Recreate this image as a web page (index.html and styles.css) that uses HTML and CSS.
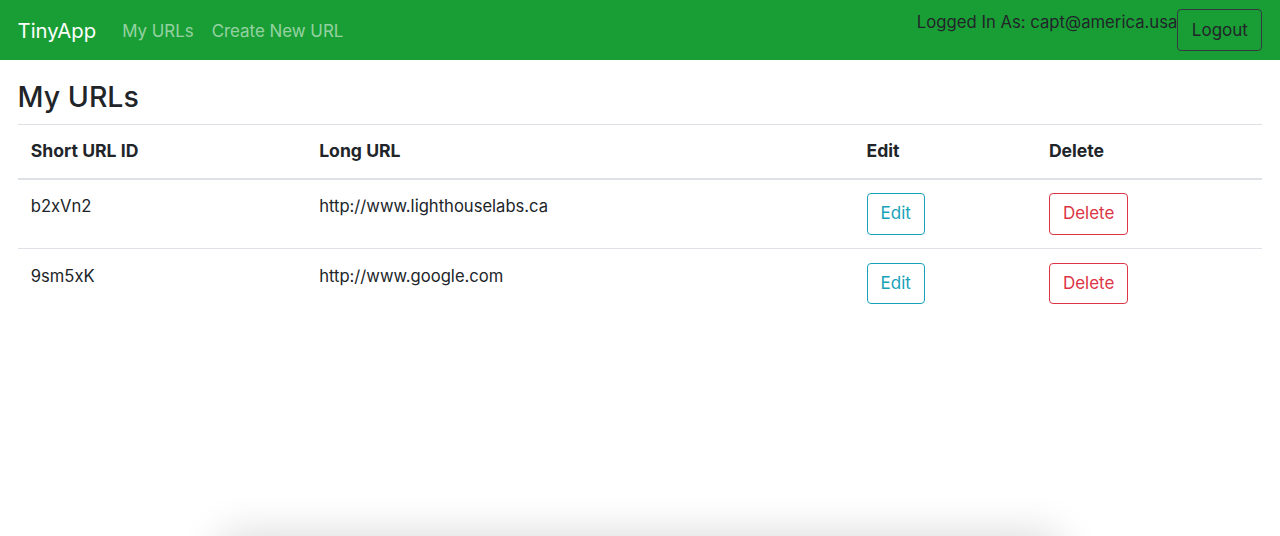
FILE: index.html
```html
<!DOCTYPE html>
<html lang="en">
<head>
<meta charset="utf-8">
<title>TinyApp</title>
<link rel="stylesheet" href="styles.css">
</head>
<body>
<nav class="navbar">
  <div class="nav-left">
    <a class="brand" href="#">TinyApp</a>
    <a class="nav-link" href="#">My URLs</a>
    <a class="nav-link" href="#">Create New URL</a>
  </div>
  <div class="nav-right">
    <span class="logged">Logged In As: capt@america.usa</span>
    <button class="btn btn-logout">Logout</button>
  </div>
</nav>
<main class="content">
  <h3 class="title">My URLs</h3>
  <table class="urls">
    <thead>
      <tr>
        <th class="col-id">Short URL ID</th>
        <th class="col-long">Long URL</th>
        <th class="col-edit">Edit</th>
        <th class="col-del">Delete</th>
      </tr>
    </thead>
    <tbody>
      <tr>
        <td>b2xVn2</td>
        <td>http://www.lighthouselabs.ca</td>
        <td><button class="btn btn-info">Edit</button></td>
        <td><button class="btn btn-danger">Delete</button></td>
      </tr>
      <tr>
        <td>9sm5xK</td>
        <td>http://www.google.com</td>
        <td><button class="btn btn-info">Edit</button></td>
        <td><button class="btn btn-danger">Delete</button></td>
      </tr>
    </tbody>
  </table>
</main>
<div class="bottom-shadow"></div>
</body>
</html>
```
FILE: styles.css
```css
html, body {
  margin: 0;
  padding: 0;
  height: 100%;
  overflow: hidden;
}
body {
  font-family: Inter, "Noto Sans", "Liberation Sans", sans-serif;
  font-size: 17.6px;
  line-height: 1.5;
  color: #212529;
  background: #fff;
}
.navbar {
  display: flex;
  justify-content: space-between;
  align-items: flex-start;
  background: #199e35;
  padding: 9px 17.6px 9px;
  height: 42px;
}
.nav-left {
  display: flex;
  align-items: center;
  height: 42px;
  padding-top: 3px;
  box-sizing: border-box;
}
.brand {
  color: #fff;
  text-decoration: none;
  font-size: 20.3px;
  margin-right: 26px;
}
.nav-link {
  color: rgba(255, 255, 255, 0.55);
  text-decoration: none;
  margin-right: 18px;
  font-size: 16.9px;
}
.nav-right {
  display: flex;
  align-items: flex-start;
}
.logged {
  color: #212529;
  font-size: 16.7px;
  line-height: 26px;
}
.btn {
  font-family: inherit;
  font-size: 17px;
  line-height: 27px;
  padding: 6.3px 13px;
  border-radius: 4px;
  background: transparent;
  border: 1px solid;
  cursor: pointer;
}
.btn-logout {
  color: #212529;
  border-color: #343a40;
  padding: 7px 13.5px 6px;
}
.btn-info {
  color: #17a2b8;
  border-color: #17a2b8;
}
.btn-danger {
  color: #dc3545;
  border-color: #dc3545;
}
.content {
  padding: 0 17.6px;
}
.title {
  margin: 20px 0 10px;
  font-size: 28.5px;
  font-weight: 500;
  line-height: 1.2;
}
.urls {
  width: 100%;
  border-collapse: collapse;
}
.urls th, .urls td {
  text-align: left;
  vertical-align: top;
  padding: 13.2px;
  border-top: 1px solid #dee2e6;
  font-size: 16.6px;
  line-height: 26.4px;
}
.urls th {
  font-weight: 700;
  font-size: 17.6px;
}
.urls thead th {
  border-bottom: 2px solid #dee2e6;
}
.urls td {
  height: 42px;
}
.col-id { width: 262px; }
.col-long { width: 521px; }
.col-edit { width: 156px; }
.bottom-shadow {
  position: fixed;
  left: 220px;
  width: 840px;
  bottom: -40px;
  height: 40px;
  border-radius: 40px;
  box-shadow: 0 0 40px 4px rgba(0, 0, 0, 0.14);
}
```
